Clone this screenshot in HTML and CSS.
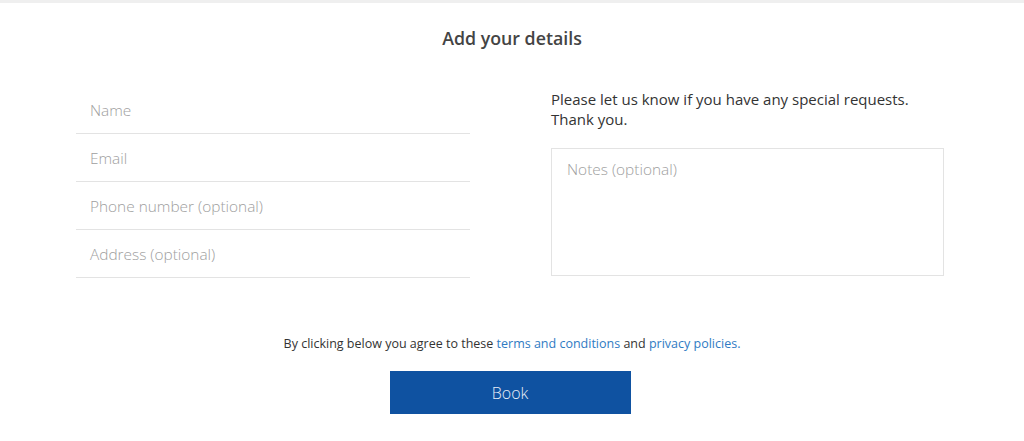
FILE: index.html
```html
<!DOCTYPE html>
<html>
<head>
<meta charset="utf-8">
<link rel="stylesheet" href="styles.css">
</head>
<body>
<div class="topbar"></div>
<h1 class="title">Add your details</h1>
<div class="form">
  <div class="col-left">
    <div class="field">Name</div>
    <div class="field">Email</div>
    <div class="field">Phone number (optional)</div>
    <div class="field">Address (optional)</div>
  </div>
  <div class="col-right">
    <p class="note">Please let us know if you have any special requests.<br>Thank you.</p>
    <div class="notes">Notes (optional)</div>
  </div>
</div>
<p class="agree">By clicking below you agree to these <a href="#">terms and conditions</a> and <a href="#">privacy policies.</a></p>
<div class="actions"><button class="book">Book</button></div>
</body>
</html>
```

FILE: styles.css
```css
html, body {
  margin: 0;
  padding: 0;
  background: #fff;
  font-family: "Open Sans", "Noto Sans", sans-serif;
  color: #333;
}
.topbar {
  height: 3px;
  background: #efefef;
}
.title {
  margin: 23px 0 0;
  font-size: 17.8px;
  line-height: 24px;
  font-weight: 600;
  text-align: center;
  color: #444;
}
.form {
  display: grid;
  grid-template-columns: 394px 393px;
  column-gap: 81px;
  padding: 0 0 0 76px;
  margin-top: 36px;
}
.field {
  height: 47px;
  border-bottom: 1px solid #e3e3e3;
  padding-left: 14px;
  font-size: 15.4px;
  font-weight: 300;
  line-height: 49px;
  color: #9e9e9e;
}
.note {
  margin: 3px 0 0;
  font-size: 15px;
  line-height: 20px;
  color: #333;
}
.notes {
  margin-top: 19px;
  border: 1px solid #e3e3e3;
  padding: 10px 15px 0;
  box-sizing: border-box;
  height: 128px;
  font-size: 15.4px;
  font-weight: 300;
  line-height: 22px;
  color: #9e9e9e;
}
.agree {
  margin: 57px 0 0;
  text-align: center;
  font-size: 12.5px;
  line-height: 18px;
  color: #333;
}
.agree a {
  color: #2f7bc3;
  text-decoration: none;
}
.actions {
  display: flex;
  justify-content: center;
  margin-top: 18px;
  padding-right: 4px;
}
.book {
  width: 241px;
  height: 43px;
  border: none;
  background: #0f52a1;
  color: #e8eef7;
  font-family: "Open Sans", "Noto Sans", sans-serif;
  font-size: 16px;
  font-weight: 300;
}
```
